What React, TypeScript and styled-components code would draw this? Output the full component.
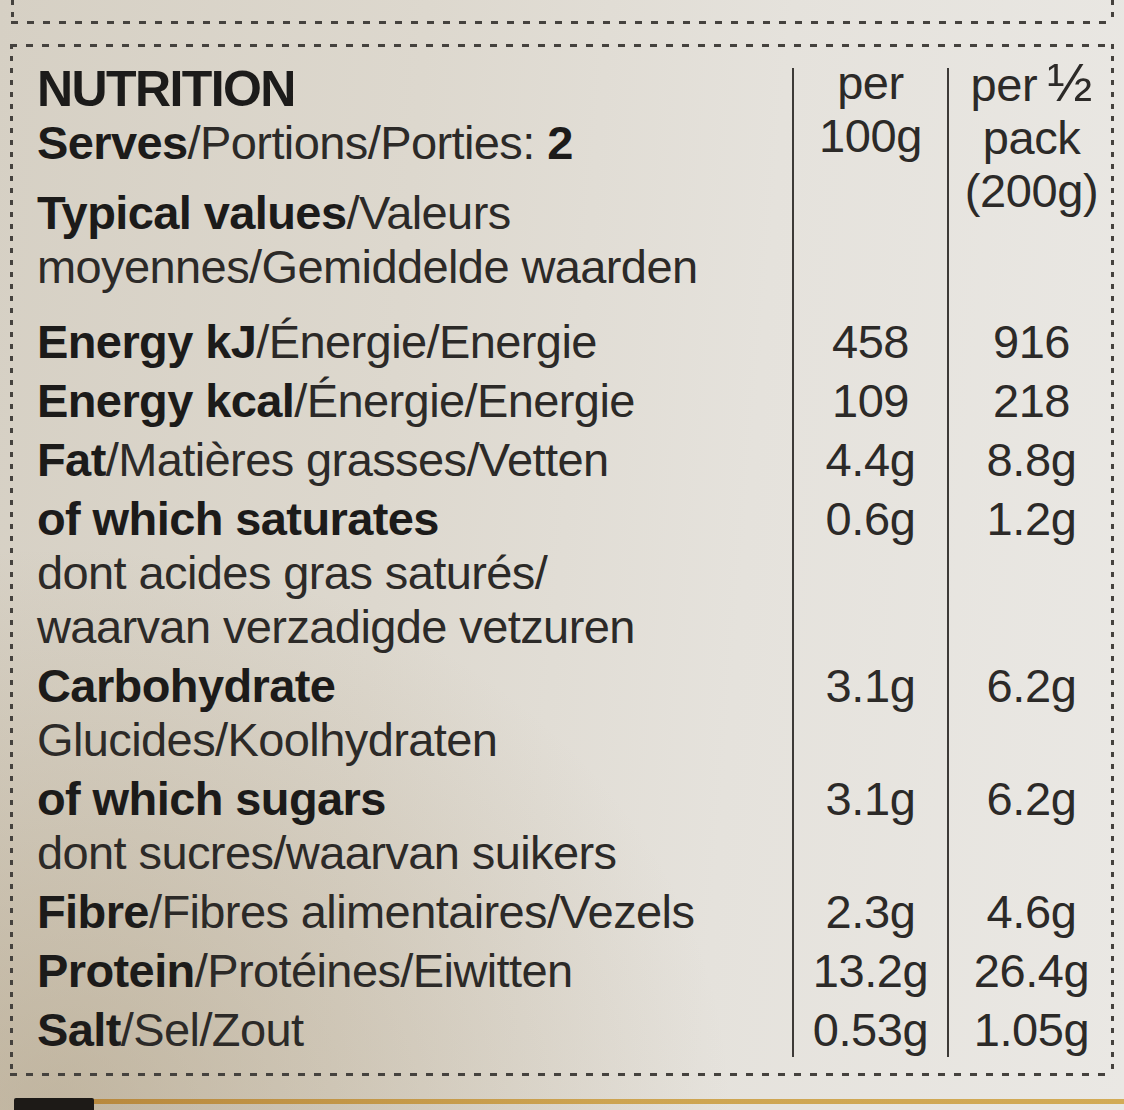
import React from 'react';
import styled, { createGlobalStyle, css } from 'styled-components';

const GlobalStyle = createGlobalStyle`
  html, body {
    margin: 0;
    padding: 0;
  }
  body {
    font-family: "Liberation Sans", Arial, Helvetica, sans-serif;
    color: #2c2a28;
  }
`;

const ink = '#45423e';

// dashed edges drawn as gradients so the dash rhythm matches the print
const dashTop = css`
  repeating-linear-gradient(90deg, ${ink} 0 7px, transparent 7px 16px) left top / 100% 3px no-repeat
`;
const dashBottom = css`
  repeating-linear-gradient(90deg, ${ink} 0 7px, transparent 7px 16px) left bottom / 100% 3px no-repeat
`;
const dashLeft = css`
  repeating-linear-gradient(180deg, ${ink} 0 5px, transparent 5px 12px) left top / 3px 100% no-repeat
`;
const dashRight = css`
  repeating-linear-gradient(180deg, ${ink} 0 5px, transparent 5px 12px) right top / 3px 100% no-repeat
`;

const Page = styled.div`
  width: 1124px;
  height: 1110px;
  overflow: hidden;
  display: flex;
  flex-direction: column;
  background:
    radial-gradient(ellipse 900px 750px at 5% 100%, rgba(160, 140, 105, 0.42), transparent 75%),
    linear-gradient(95deg, #d6d0c4 0%, #ddd8ce 35%, #e5e2dc 65%, #eae8e4 100%);
`;

const PrevBox = styled.div`
  height: 24px;
  margin: 0 10px 0 11px;
  flex-shrink: 0;
  background: ${dashBottom}, ${dashLeft}, ${dashRight};
`;

const Panel = styled.section`
  margin: 20px 10px 0 10px;
  padding: 24px 0 19px 27px;
  background: ${dashTop}, ${dashBottom}, ${dashLeft}, ${dashRight};
`;

const Row = styled.div`
  display: grid;
  grid-template-columns: 1fr 155px 167px;
`;

const Label = styled.div<{ $lift?: number; $tail?: number }>`
  font-size: 47px;
  line-height: 54px;
  letter-spacing: -0.6px;
  margin-top: ${p => -(p.$lift ?? 0)}px;
  padding-bottom: ${p => p.$tail ?? 0}px;
  padding-top: 5px;
`;

const Line = styled.div<{ $gap?: number }>`
  white-space: nowrap;
  margin-top: ${p => p.$gap ?? 0}px;
`;

const Strong = styled.b`
  font-weight: 700;
  color: #1c1b1a;
`;

const Title = styled.div`
  font-size: 50px;
  font-weight: 700;
  letter-spacing: -1.6px;
  color: #1c1b1a;
`;

const Value = styled.div`
  border-left: 2px solid #3d3a37;
  text-align: center;
  font-size: 47px;
  line-height: 54px;
  letter-spacing: -0.4px;
  padding-top: 5px;
`;

const HeadValue = styled(Value)`
  padding-top: 0;
  line-height: 53px;
`;

const HeadStack = styled.div`
  margin-top: -12px;
`;

const Frac = styled.span`
  font-size: 54px;
  margin-left: 10px;
  letter-spacing: 0;
`;

const BottomEdge = styled.div`
  margin-top: auto;
  height: 12px;
  display: flex;
  align-items: flex-start;
`;

const BlackTab = styled.div`
  width: 80px;
  height: 12px;
  margin-left: 14px;
  background: #1d1a17;
  border-radius: 2px 2px 0 0;
`;

const GoldRule = styled.div`
  flex: 1;
  height: 5px;
  background: linear-gradient(90deg, #b8893e, #cda451 50%, #d2ab56);
  margin-top: 1px;
`;

type Nutrient = {
  name: string;
  rest?: string;
  sub?: string[];
  per100: string;
  perPack: string;
};

const nutrients: Nutrient[] = [
  { name: 'Energy kJ', rest: '/Énergie/Energie', per100: '458', perPack: '916' },
  { name: 'Energy kcal', rest: '/Énergie/Energie', per100: '109', perPack: '218' },
  { name: 'Fat', rest: '/Matières grasses/Vetten', per100: '4.4g', perPack: '8.8g' },
  {
    name: 'of which saturates',
    sub: ['dont acides gras saturés/', 'waarvan verzadigde vetzuren'],
    per100: '0.6g',
    perPack: '1.2g',
  },
  { name: 'Carbohydrate', sub: ['Glucides/Koolhydraten'], per100: '3.1g', perPack: '6.2g' },
  {
    name: 'of which sugars',
    sub: ['dont sucres/waarvan suikers'],
    per100: '3.1g',
    perPack: '6.2g',
  },
  { name: 'Fibre', rest: '/Fibres alimentaires/Vezels', per100: '2.3g', perPack: '4.6g' },
  { name: 'Protein', rest: '/Protéines/Eiwitten', per100: '13.2g', perPack: '26.4g' },
  { name: 'Salt', rest: '/Sel/Zout', per100: '0.53g', perPack: '1.05g' },
];

const App: React.FC = () => {
  return (
    <Page>
      <GlobalStyle />
      <PrevBox />
      <Panel>
        <Row>
          <Label $lift={11} $tail={16}>
            <Title>NUTRITION</Title>
            <Line>
              <Strong>Serves</Strong>/Portions/Porties: <Strong>2</Strong>
            </Line>
            <Line $gap={16}>
              <Strong>Typical values</Strong>/Valeurs
            </Line>
            <Line>moyennes/Gemiddelde waarden</Line>
          </Label>
          <HeadValue>
            <HeadStack>
              <Line>per</Line>
              <Line>100g</Line>
            </HeadStack>
          </HeadValue>
          <HeadValue>
            <HeadStack>
              <Line>
                per<Frac>½</Frac>
              </Line>
              <Line>pack</Line>
              <Line>(200g)</Line>
            </HeadStack>
          </HeadValue>
        </Row>
        {nutrients.map(n => (
          <Row key={n.name}>
            <Label>
              <Line>
                <Strong>{n.name}</Strong>
                {n.rest}
              </Line>
              {n.sub?.map(s => (
                <Line key={s}>{s}</Line>
              ))}
            </Label>
            <Value>{n.per100}</Value>
            <Value>{n.perPack}</Value>
          </Row>
        ))}
      </Panel>
      <BottomEdge>
        <BlackTab />
        <GoldRule />
      </BottomEdge>
    </Page>
  );
};

export default App;
